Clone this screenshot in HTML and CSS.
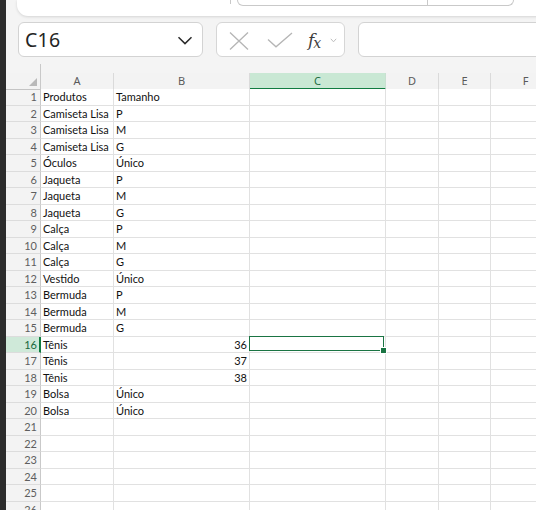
FILE: index.html
```html
<!DOCTYPE html>
<html lang="pt">
<head>
<meta charset="utf-8">
<title>Planilha</title>
<link rel="stylesheet" href="styles.css">
</head>
<body>
<div class="app">
  <div class="rail"></div>
  <div class="main">
    <div class="topcard">
      <div class="tick"></div>
      <div class="search"><div class="search-part"></div><div class="search-part last"></div></div>
    </div>
    <div class="toolbar">
      <div class="namebox">
        <span class="ref">C16</span>
        <svg class="chev" width="16" height="9" viewBox="0 0 16 9"><path d="M1.5 1.2 L8 7.6 L14.5 1.2" fill="none" stroke="#2b2b2b" stroke-width="1.5"/></svg>
      </div>
      <div class="fbtns">
        <svg class="ico-x" width="22" height="18" viewBox="0 0 22 18"><path d="M2 0.5 L20 17.5 M20 0.5 L2 17.5" fill="none" stroke="#b5b5b5" stroke-width="1.3"/></svg>
        <svg class="ico-check" width="26" height="16" viewBox="0 0 26 16"><path d="M1 7.5 L9 14.8 L25 1" fill="none" stroke="#b5b5b5" stroke-width="1.3"/></svg>
        <span class="fx"><span class="fx-f">f</span><span class="fx-x">x</span></span>
        <svg class="ico-sm" width="7" height="5" viewBox="0 0 7 5"><path d="M0.8 0.8 L3.5 3.8 L6.2 0.8" fill="none" stroke="#bdbdbd" stroke-width="1"/></svg>
      </div>
      <div class="finput"></div>
    </div>
    <div class="gap"><div class="gap-rh"></div></div>
    <div class="sheet">
      <div class="row head">
        <div class="rh corner"><span class="tri"></span></div>
        <div class="ch">A</div><div class="ch">B</div><div class="ch sel">C</div><div class="ch">D</div><div class="ch">E</div><div class="ch">F</div>
      </div>
      <div class="row"><div class="rh">1</div><div class="c">Produtos</div><div class="c">Tamanho</div><div class="c"></div><div class="c"></div><div class="c"></div><div class="c"></div></div>
      <div class="row"><div class="rh">2</div><div class="c">Camiseta Lisa</div><div class="c">P</div><div class="c"></div><div class="c"></div><div class="c"></div><div class="c"></div></div>
      <div class="row"><div class="rh">3</div><div class="c">Camiseta Lisa</div><div class="c">M</div><div class="c"></div><div class="c"></div><div class="c"></div><div class="c"></div></div>
      <div class="row"><div class="rh">4</div><div class="c">Camiseta Lisa</div><div class="c">G</div><div class="c"></div><div class="c"></div><div class="c"></div><div class="c"></div></div>
      <div class="row"><div class="rh">5</div><div class="c">Óculos</div><div class="c">Único</div><div class="c"></div><div class="c"></div><div class="c"></div><div class="c"></div></div>
      <div class="row"><div class="rh">6</div><div class="c">Jaqueta</div><div class="c">P</div><div class="c"></div><div class="c"></div><div class="c"></div><div class="c"></div></div>
      <div class="row"><div class="rh">7</div><div class="c">Jaqueta</div><div class="c">M</div><div class="c"></div><div class="c"></div><div class="c"></div><div class="c"></div></div>
      <div class="row"><div class="rh">8</div><div class="c">Jaqueta</div><div class="c">G</div><div class="c"></div><div class="c"></div><div class="c"></div><div class="c"></div></div>
      <div class="row"><div class="rh">9</div><div class="c">Calça</div><div class="c">P</div><div class="c"></div><div class="c"></div><div class="c"></div><div class="c"></div></div>
      <div class="row"><div class="rh">10</div><div class="c">Calça</div><div class="c">M</div><div class="c"></div><div class="c"></div><div class="c"></div><div class="c"></div></div>
      <div class="row"><div class="rh">11</div><div class="c">Calça</div><div class="c">G</div><div class="c"></div><div class="c"></div><div class="c"></div><div class="c"></div></div>
      <div class="row"><div class="rh">12</div><div class="c">Vestido</div><div class="c">Único</div><div class="c"></div><div class="c"></div><div class="c"></div><div class="c"></div></div>
      <div class="row"><div class="rh">13</div><div class="c">Bermuda</div><div class="c">P</div><div class="c"></div><div class="c"></div><div class="c"></div><div class="c"></div></div>
      <div class="row"><div class="rh">14</div><div class="c">Bermuda</div><div class="c">M</div><div class="c"></div><div class="c"></div><div class="c"></div><div class="c"></div></div>
      <div class="row"><div class="rh">15</div><div class="c">Bermuda</div><div class="c">G</div><div class="c"></div><div class="c"></div><div class="c"></div><div class="c"></div></div>
      <div class="row"><div class="rh sel">16</div><div class="c">Tênis</div><div class="c num">36</div><div class="c active"><span class="cursor"><span class="handle"></span></span></div><div class="c"></div><div class="c"></div><div class="c"></div></div>
      <div class="row"><div class="rh">17</div><div class="c">Tênis</div><div class="c num">37</div><div class="c"></div><div class="c"></div><div class="c"></div><div class="c"></div></div>
      <div class="row"><div class="rh">18</div><div class="c">Tênis</div><div class="c num">38</div><div class="c"></div><div class="c"></div><div class="c"></div><div class="c"></div></div>
      <div class="row"><div class="rh">19</div><div class="c">Bolsa</div><div class="c">Único</div><div class="c"></div><div class="c"></div><div class="c"></div><div class="c"></div></div>
      <div class="row"><div class="rh">20</div><div class="c">Bolsa</div><div class="c">Único</div><div class="c"></div><div class="c"></div><div class="c"></div><div class="c"></div></div>
      <div class="row"><div class="rh">21</div><div class="c"></div><div class="c"></div><div class="c"></div><div class="c"></div><div class="c"></div><div class="c"></div></div>
      <div class="row"><div class="rh">22</div><div class="c"></div><div class="c"></div><div class="c"></div><div class="c"></div><div class="c"></div><div class="c"></div></div>
      <div class="row"><div class="rh">23</div><div class="c"></div><div class="c"></div><div class="c"></div><div class="c"></div><div class="c"></div><div class="c"></div></div>
      <div class="row"><div class="rh">24</div><div class="c"></div><div class="c"></div><div class="c"></div><div class="c"></div><div class="c"></div><div class="c"></div></div>
      <div class="row"><div class="rh">25</div><div class="c"></div><div class="c"></div><div class="c"></div><div class="c"></div><div class="c"></div><div class="c"></div></div>
      <div class="row"><div class="rh">26</div><div class="c"></div><div class="c"></div><div class="c"></div><div class="c"></div><div class="c"></div><div class="c"></div></div>
    </div>
  </div>
</div>
</body>
</html>
```

FILE: styles.css
```css
* { box-sizing: border-box; }
html, body { margin: 0; padding: 0; }
body {
  width: 536px;
  height: 510px;
  overflow: hidden;
  background: #f4f4f4;
  font-family: "Lato", "Liberation Sans", sans-serif;
}
.app { display: flex; height: 510px; }
.rail { width: 6px; flex: none; background: #2c2c2c; }
.main { flex: 1; min-width: 0; display: flex; flex-direction: column; overflow: hidden; }
.main > * { flex: none; }

.topcard {
  height: 16px;
  margin-left: 11px;
  margin-right: -30px;
  background: #fff;
  border-radius: 0 0 0 11px;
  box-shadow: 0 1px 3px rgba(0,0,0,0.13);
  display: flex;
  align-items: flex-start;
  padding-left: 213px;
  gap: 6px;
  position: relative;
}
.tick { width: 1px; height: 4px; background: #c8c8c8; }
.search { display: flex; height: 6px; }
.search-part { width: 191px; height: 6px; border: 1px solid #c9c9c9; border-top: none; border-radius: 0 0 0 6px; }
.search-part.last { width: 86px; border-left: none; border-radius: 0 0 6px 0; }

.toolbar { display: flex; margin-top: 6px; padding-left: 12px; height: 35px; gap: 13px; }
.namebox {
  width: 185px;
  flex: none;
  background: #fff;
  border: 1px solid #d3d3d3;
  border-radius: 6px;
  display: flex;
  align-items: center;
  justify-content: space-between;
  padding: 0 9px 0 6px;
}
.ref { font-family: "Noto Sans", "Open Sans", sans-serif; font-size: 19.5px; color: #242424; letter-spacing: 0.2px; }
.chev { display: block; margin-top: 1px; }
.fbtns {
  width: 129px;
  flex: none;
  background: #fff;
  border: 1px solid #d6d6d6;
  border-radius: 6px;
  display: flex;
  align-items: center;
  padding-left: 11px;
}
.ico-x { display: block; margin-top: 2px; }
.ico-check { display: block; margin-left: 17px; margin-top: 0; }
.fx { margin-left: 15px; font-family: "DejaVu Serif", serif; font-style: italic; color: #3d3d3d; display: flex; align-items: baseline; }
.fx-f { font-size: 17px; }
.fx-x { font-size: 14px; position: relative; top: 2px; margin-left: -1px; }
.ico-sm { display: block; margin-left: 9px; margin-top: 1px; }
.finput {
  flex: 1;
  margin-right: -20px;
  background: #fff;
  border: 1px solid #d3d3d3;
  border-radius: 6px;
}

.gap { height: 16px; display: flex; align-items: flex-end; }
.gap-rh { width: 35px; height: 9px; border-right: 1px solid #c9c9c9; }

.sheet { display: flex; flex-direction: column; }
.row {
  display: grid;
  grid-template-columns: 35px 73px 136px 136px 53px 52px 70px;
  height: 16.53px;
  flex: none;
}
.row.head { height: 16px; }
.rh {
  background: #f3f3f3;
  border-right: 1px solid #c9c9c9;
  border-bottom: 1px solid #dcdcdc;
  text-align: right;
  padding-right: 3px;
  font-size: 11px;
  line-height: 15.5px;
  color: #5e5e5e;
}
.rh.sel { background: #cfe9d9; color: #17683c; border-right: 2px solid #107c41; padding-right: 2px; }
.rh.corner { position: relative; border-bottom: 1px solid #c4c4c4; }
.tri {
  position: absolute;
  right: 3px;
  bottom: 3px;
  width: 0; height: 0;
  border-left: 8px solid transparent;
  border-bottom: 8px solid #b9b9b9;
}
.ch {
  background: #f3f3f3;
  border-right: 1px solid #dadada;
  border-bottom: 1px solid #c4c4c4;
  text-align: center;
  font-family: "Noto Sans", "Open Sans", sans-serif;
  font-size: 11px;
  line-height: 15px;
  color: #5a5a5a;
}
.ch.sel { background: #c9e8d4; color: #1d6c42; border-bottom: 2px solid #107c41; border-right-color: #c9e0d1; }
.c {
  background: #fff;
  border-right: 1px solid #e1e1e1;
  border-bottom: 1px solid #e1e1e1;
  padding-left: 2px;
  font-size: 11px;
  line-height: 15.5px;
  color: #111;
  white-space: nowrap;
  overflow: visible;
}
.c.num { text-align: right; padding-right: 2px; }
.c.active { position: relative; }
.cursor {
  position: absolute;
  top: -1px;
  left: -1px;
  width: 135px;
  height: 15px;
  border: 1px solid #1a7443;
}
.handle {
  position: absolute;
  right: -3px;
  bottom: -3px;
  width: 5px;
  height: 5px;
  background: #1a7443;
  border: 1px solid #fff;
  box-sizing: content-box;
  margin: -1px;
}
```
